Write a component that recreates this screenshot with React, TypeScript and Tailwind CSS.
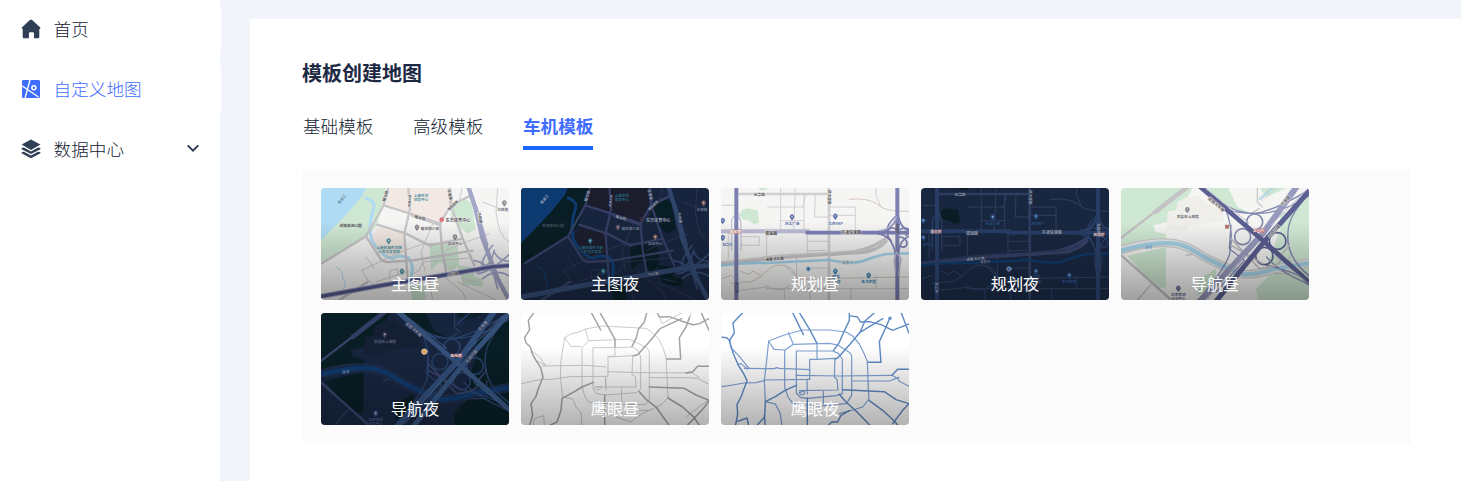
import type { ReactNode } from "react";
import clsx from "clsx";

type Palette = {
  land: string;
  water: string;
  park: string;
  district: string;
  road: string;
  minor: string;
  highway: string;
  highwayDark: string;
  text: string;
  poi: string;
  halo: string;
  badge: string;
};

const day: Palette = {
  land: "#f5f5f4",
  water: "#afdcf4",
  park: "#cfe8d3",
  district: "#f3e9e4",
  road: "#c9c6c9",
  minor: "#cfcccd",
  highway: "#a3a6c8",
  highwayDark: "#565b90",
  text: "#57535a",
  poi: "#5595a2",
  halo: "#f5f5f4",
  badge: "#c98078",
};

const night: Palette = {
  land: "#17243d",
  water: "#0d3a70",
  park: "#081d24",
  district: "#1b1d2c",
  road: "#343d63",
  minor: "#2a3452",
  highway: "#30456b",
  highwayDark: "#304469",
  text: "#939cb0",
  poi: "#26657c",
  halo: "#17243d",
  badge: "#5e4257",
};

function Canvas({ fill, children }: { fill: string; children: ReactNode }) {
  return (
    <svg viewBox="15 18 564 336" className="block h-full w-full" preserveAspectRatio="none" fill="none" strokeLinejoin="round" strokeLinecap="round">
      <rect x="0" y="0" width="600" height="372" fill={fill} />
      {children}
    </svg>
  );
}

type LabelProps = { x: number; y: number; text: string; color: string; halo: string; size?: number; rotate?: number };

function Label({ x, y, text, color, halo, size = 12, rotate = 0 }: LabelProps) {
  return (
    <text
      x={x}
      y={y}
      fill={color}
      stroke={halo}
      strokeWidth="2"
      paintOrder="stroke"
      fontSize={size}
      fontWeight="700"
      textAnchor="middle"
      dominantBaseline="central"
      transform={`rotate(${rotate} ${x} ${y})`}
    >
      {text}
    </text>
  );
}

function Pin({ x, y, color }: { x: number; y: number; color: string }) {
  return (
    <g>
      <path d={`M${x} ${y + 10}l-5-7a7 7 0 1 1 10 0z`} fill={color} />
      <circle cx={x} cy={y - 2} r="2.5" fill="#fff" fillOpacity=".6" />
    </g>
  );
}

function MainMap({ p }: { p: Palette }) {
  const dark = p === night;
  return (
    <Canvas fill={p.land}>
      <g transform={dark ? "matrix(.98 0 0 1 9 0)" : undefined}>
        <path d="M0 0H215L205 60L185 130L150 163L0 250Z" fill={p.park} />
        <path d="M0 0H158L140 40L96 92L60 130L0 190Z" fill={p.water} />
        <path d="M215 10H398L405 50L372 124L300 100L205 74Z" fill={p.district} />
        <path d="M185 134L262 155L268 214L205 228L166 166Z" fill={p.district} />
        <path d="M196 76L265 100L262 148L184 127Z" fill={p.land} />
        <path d="M405 75L440 50L466 60L480 140L455 155L425 130L404 112ZM340 190L380 180L425 190L430 250L405 270L372 240L345 265ZM425 250L470 255L475 285L500 290L500 315L440 305ZM280 310L325 310L330 354H290Z" fill={p.park} />
        <path d="M150 48Q183 60 171 85Q158 122 164 158Q166 185 192 206Q210 228 230 229Q245 216 276 227Q296 247 285 285" stroke={p.water} strokeWidth="9" />
        <path d="M60 255Q83 265 80 290Q95 300 82 320M283 285L300 315" stroke={p.water} strokeWidth="3" />
        <path d="M138 265L246 213L322 185L420 184M138 265L155 295L185 315M180 300L270 270M150 225L175 260M326 265L315 210L350 126M350 200L340 190L268 155M220 290L222 265L245 260L245 280M292 275L310 265L320 240L460 228M390 205L450 180L520 155M425 300L540 354M380 280L440 330L450 354M340 300L350 354M440 10L430 55M545 18L540 90Q548 165 579 180M500 60L579 90M480 300L440 290" stroke={p.minor} strokeWidth="3" />
        <path d="M219 10L203 70L150 163L18 244M203 70L300 100L372 125L404 70L465 40M184 128L270 155L340 190L440 170M150 163L190 225Q198 240 215 240L290 235L470 206M276 10L282 80L265 155L275 290M372 125L378 200L392 280M404 70L398 10M405 70L440 170L475 250M70 354L155 300" stroke={p.road} strokeWidth="7" />
        <path d="M400 10L405 60M290 100L372 127" stroke={p.road} strokeWidth="10" />
        <path d="M456 10L477 75L500 170L545 290L579 354" stroke={p.highway} strokeWidth="13" />
        <path d="M480 70L515 190M535 205Q520 262 480 270M535 210Q550 240 585 238M475 235Q520 245 535 285L545 320M485 275Q525 270 585 212M500 290Q540 255 585 285M530 190Q490 240 500 255" stroke={p.highway} strokeWidth="5" />
        <path d="M10 344L200 310L390 278L530 254L590 250" stroke={p.highway} strokeWidth="15" />
        <path d="M10 344L200 310L390 278L530 254L590 250" stroke={p.highwayDark} strokeWidth="9" />
        <Label x={77} y={52} text="黄浦江" color={dark ? p.text : "#7795a6"} halo={p.water} size={11} rotate={-52} />
        <Label x={104} y={131} text="前滩休闲公园" color={dark ? "#40505c" : p.text} halo={p.park} size={11} />
        <Label x={315} y={39} text="上海东方" color={p.poi} halo={p.district} size={11} />
        <Label x={315} y={51} text="体育中心" color={p.poi} halo={p.district} size={11} />
        <Label x={426} y={113} text="东方体育中心" color={p.text} halo={p.halo} size={12.5} />
        <circle cx="377" cy="113" r="7" fill={dark ? "#373144" : "#dc727a"} />
        <Label x={342} y={140} text="耀体路小区" color={dark ? "#707a90" : "#737078"} halo={p.halo} size={11} />
        <Pin x={303} y={137} color={dark ? "#574b5a" : "#88868b"} />
        <Label x={417} y={184} text="实训中心" color={dark ? "#707a90" : "#737078"} halo={p.halo} size={11} />
        <Pin x={417} y={166} color={dark ? "#77575b" : "#88868b"} />
        <Label x={219} y={196} text="上海前滩东方路" color={p.poi} halo={p.district} size={11} />
        <Label x={219} y={208} text="人民法文学校" color={p.poi} halo={p.district} size={11} />
        <Pin x={218} y={178} color={p.poi} />
        <Pin x={258} y={269} color={p.poi} />
        <Label x={560} y={83} text="三林路" color={dark ? "#707a90" : "#737078"} halo={p.halo} size={11} />
        <Pin x={565} y={64} color={dark ? "#77575b" : "#88868b"} />
        <Label x={208} y={42} text="耀龙路" color={p.text} halo={p.halo} size={11} rotate={-72} />
        <Label x={281} y={57} text="前滩大道" color={p.text} halo={p.halo} size={9} rotate={-86} />
        <Label x={312} y={107} text="耀体路" color={p.text} halo={p.halo} size={11} rotate={15} />
        <Label x={402} y={38} text="东育路" color={p.text} halo={p.halo} size={11} rotate={76} />
        <Label x={410} y={70} text="海阳西路" color={p.text} halo={p.halo} size={10} rotate={-43} />
        <Label x={492} y={107} text="济阳路" color={p.text} halo={p.halo} size={11} rotate={78} />
        <Label x={411} y={276} text="中环路" color={p.text} halo={p.halo} size={11} rotate={-9} />
      </g>
    </Canvas>
  );
}

function PlanMap({ p }: { p: Palette }) {
  const dark = p === night;
  const land = dark ? "#18263f" : p.land;
  const label = dark ? "#284d80" : "#6072ac";
  const highway = dark ? "#273d65" : "#7d80b3";
  const road = dark ? "#303d61" : "#d2cfd2";
  return (
    <Canvas fill={land}>
      <g transform={dark ? "translate(2 0)" : undefined}>
        <path d="M77 84L92 79L125 84L130 122L115 127L98 116L80 112L71 99ZM124 15H154L151 25L132 24Z" fill={p.park} />
        <path d="M62 36H338M194 18V145M238 18L233 145M264 36V145M298 36L296 105H336M260 75L270 36M155 75H264M418 75H338M418 75V145M192 116H265M274 155V220M274 178H338M274 207L330 205M152 155V225M75 164H130V190H75M241 220L243 320M275 258H338M205 250L243 285M336 100H418M62 70H18M37 155V230M70 325L155 315M150 320H579M205 320V354M405 320V354M480 280V320M282 320V354" stroke={road} strokeWidth="3" />
        <path d="M60 36H338M339 10V354" stroke={road} strokeWidth="8" />
        <path d="M10 247L200 226L320 218L440 211Q485 205 510 178M340 218Q455 213 515 165" stroke={dark ? "#333f63" : "#c9c7ca"} strokeWidth="10" />
        <path d="M10 240L200 219L330 212L450 204" stroke={dark ? "#293757" : "#d5d2d3"} strokeWidth="4" />
        <path d="M10 251Q75 241 150 243L338 234Q400 246 435 239Q480 222 510 216L590 214" stroke={dark ? "#103763" : "#a5d5eb"} strokeWidth="8" />
        <path d="M400 52Q455 46 485 67Q505 90 579 88M45 304L85 300Q115 305 150 270Q175 240 212 252Q250 270 233 300Q208 330 170 321L150 310M245 292Q350 290 400 288L579 285M18 290L45 280L55 290M75 268L96 277L112 267L135 282" stroke={dark ? "#2b4264" : "#d7c6c1"} strokeWidth="3" />
        <path d="M480 18V40L495 75M75 120L68 93" stroke={road} strokeWidth="3" />
        <path d="M47 205V120Q47 102 61 100Q75 110 75 125V205" stroke={dark ? "#283d62" : "#c5c5dd"} strokeWidth="4" />
        <path d="M10 148H277" stroke={dark ? highway : "#bcbdd6"} strokeWidth="12" />
        <path d="M273 152H590" stroke={highway} strokeWidth="11" />
        <path d="M61 10V360M544 10V360" stroke={highway} strokeWidth="12" />
        <path d="M485 152Q525 145 541 112M485 155Q530 160 539 220M548 105Q555 145 590 148M548 210Q550 170 590 158M525 175C505 160 518 125 540 142M554 142C580 130 585 150 570 160M550 165C580 165 580 205 553 193M537 105Q510 130 514 150" stroke={highway} strokeWidth="5" />
        <path d="M541 105Q525 145 490 145M541 210L555 230L548 280M541 210L534 235L539 270" stroke={dark ? "#2b4064" : "#b5b6cb"} strokeWidth="4" />
        <Label x={130} y={36} text="光华路" color={p.text} halo={land} size={11} />
        <Label x={340} y={46} text="西大望路" color={p.text} halo={land} size={11} rotate={90} />
        <Label x={228} y={125} text="万达广场" color={label} halo={land} size={11} />
        <Pin x={228} y={106} color={label} />
        <Label x={358} y={124} text="北京SKP" color={label} halo={land} size={11} />
        <Pin x={358} y={104} color={label} />
        <Label x={166} y={152} text="建国路" color={p.text} halo={land} size={12} />
        <Label x={58} y={147} text="国贸桥" color={dark ? "#d0c7ce" : "#ffffff"} halo={p.badge} size={11} />
        <Label x={405} y={150} text="京通快速路" color={p.text} halo={land} size={12} />
        <Label x={176} y={230} text="通惠河北路" color={p.text} halo={land} size={11} rotate={-3} />
        {!dark && <Label x={394} y={240} text="通惠河" color="#7fa5ba" halo={land} size={11} />}
        <Label x={545} y={140} text="东四环" color={p.text} halo={highway} size={11} rotate={90} />
        <Label x={35} y={188} text="航华科" color={label} halo={land} size={10} />
        <Pin x={20} y={168} color={label} />
        <Pin x={20} y={117} color={label} />
        <circle cx="277" cy="261" r="6.5" fill={dark ? "#3b6ba7" : "#397fb6"} stroke={dark ? "#8c9bb3" : "#c1d8e7"} strokeWidth="3" />
        <Label x={360} y={286} text="双井" color={dark ? label : "#4a89b8"} halo={land} size={12} />
        <Label x={362} y={300} text="百环" color={dark ? label : "#4a89b8"} halo={land} size={12} />
        <Pin x={358} y={269} color={dark ? label : "#4a89b8"} />
        <Label x={458} y={299} text="金茂家园" color={dark ? label : "#4a89b8"} halo={land} size={11} />
        <Pin x={458} y={281} color={dark ? label : "#4a89b8"} />
        <Label x={60} y={317} text="东三环" color={p.text} halo={highway} size={11} rotate={90} />
        {dark && <Label x={547} y={156} text="四惠桥" color="#d0c7ce" halo={p.badge} size={11} />}
        {dark && <Label x={205} y={238} text="通惠河" color="#6d7c97" halo={land} size={10} />}
      </g>
    </Canvas>
  );
}

function NaviMap({ p }: { p: Palette }) {
  const dark = p === night;
  const core = dark ? "#345079" : "#5b5f91";
  const wide = dark ? "#304b76" : "#999bbe";
  const ramp = dark ? "#273e66" : "#858ab0";
  const label = dark ? "#425582" : "#61698f";
  return (
    <Canvas fill={p.land}>
      <g transform={dark ? "translate(-8 0)" : undefined}>
        <path d="M10 0H240L215 45L185 60L180 85L155 90V120L112 130L118 150L150 155V175L10 220ZM420 0H600V360H575L450 260L500 120ZM260 10H350L400 70L450 80L410 95L340 75L280 50ZM35 222L150 195V315L120 320ZM460 280L580 260V370H430L420 320ZM250 290L300 260L300 310L245 340Z" fill={p.park} />
        <path d="M335 15H415L430 55L510 18H585L520 90L420 100L365 75Z" fill={p.land} />
        <path d="M212 45L245 42L320 92L325 118L222 130L209 148L152 140L155 92L180 85L185 60Z" fill={dark ? "#141f34" : "#efeeeb"} />
        <path d="M18 222L178 365M105 308L65 354M210 220Q270 205 325 260M424 18V60L440 75M405 95L430 80M460 245V275H520V220" stroke={dark ? "#2c3a5c" : "#c9c8c8"} strokeWidth="4" />
        <path d="M10 172L110 95L222 10M18 222L178 365" stroke={dark ? "#374269" : "#c0bec1"} strokeWidth="7" />
        <path d="M118 90L220 10" stroke={dark ? "#333e66" : "#c4c2c4"} strokeWidth="14" />
        <path d="M10 205Q105 175 175 184Q215 190 260 222Q325 257 380 276Q420 280 470 262L590 241" stroke={dark ? "#242f4c" : "#c9c8c8"} strokeWidth="26" />
        <path d="M10 205Q105 175 175 184Q215 190 260 222Q325 257 380 276Q420 280 470 262L590 241" stroke={dark ? "#14294a" : "#e6e9ea"} strokeWidth="20" />
        <path d="M10 207Q105 179 175 184Q215 190 260 222Q325 257 380 276Q420 280 470 262L590 241" stroke={dark ? "#103868" : "#a6d2e6"} strokeWidth="13" />
        <path d="M432 52L470 18" stroke={dark ? "#233c66" : "#a6d2e6"} strokeWidth="5" />
        <path d="M427 48L463 16M438 58L480 20" stroke={dark ? "#2c3a5c" : "#c9c8c8"} strokeWidth="2" />
        <circle cx="416" cy="120" r="24" stroke={ramp} strokeWidth="5" />
        <circle cx="380" cy="164" r="24" stroke={ramp} strokeWidth="5" />
        <circle cx="485" cy="177" r="25" stroke={dark ? ramp : core} strokeWidth="5" />
        <circle cx="445" cy="222" r="26" stroke={dark ? ramp : core} strokeWidth="5" />
        <path d="M260 18L332 90Q355 155 340 220Q318 275 240 362M280 45Q365 96 420 94Q500 95 585 38M330 82Q410 104 450 86Q500 72 585 20M585 310Q485 268 452 225M590 290Q505 230 517 140Q524 90 590 25M450 250Q530 265 590 305M345 130L340 200L385 235L300 330M515 160Q512 230 585 285" stroke={ramp} strokeWidth="4" />
        <path d="M345 170L430 260Q500 255 495 220L520 190M345 190L440 245" stroke={dark ? "#374064" : "#c1bdc0"} strokeWidth="5" />
        <path d="M545 10L440 155L245 365" stroke={wide} strokeWidth="18" />
        <path d="M250 12L440 175L590 310" stroke={core} strokeWidth="14" />
        <path d="M590 15L446 177L290 370" stroke={core} strokeWidth="15" />
        <path d="M465 130L570 25M385 220L275 350M270 20L400 124M480 225L585 310" stroke={dark ? "#445e88" : "#c0c2d2"} strokeWidth="3" />
        <Label x={302} y={66} text="远西河东路" color={p.text} halo={p.halo} size={12} rotate={40} />
        <Label x={507} y={55} text="北岸路" color={p.text} halo={p.halo} size={12} rotate={-48} />
        <Label x={473} y={147} text="北四环路" color={p.text} halo={p.halo} size={12} rotate={-50} />
        <Label x={215} y={102} text="房县石上海馆" color={dark ? "#515971" : "#737078"} halo={p.land} size={11} />
        <Pin x={214} y={84} color={dark ? "#464256" : "#85848b"} />
        <Label x={97} y={194} text="清河" color={dark ? "#7688a5" : "#7fa5ba"} halo={p.water} size={11} rotate={-4} />
        <Label x={428} y={146} text="五元桥" color="#e6d9dc" halo={dark ? "#8b4b59" : "#c96866"} size={11.5} />
        <Label x={187} y={338} text="北京崇德" color={label} halo={p.land} size={11} />
        <Label x={187} y={348} text="体育中心" color={label} halo={p.land} size={10} />
        <Pin x={187} y={320} color={label} />
        {dark ? (
          <circle cx="333" cy="134" r="8" fill="#e4a34e" stroke="#d5c9b6" strokeWidth="3" />
        ) : (
          <rect x="327" y="128" width="12" height="12" rx="2" fill="#b97871" />
        )}
      </g>
    </Canvas>
  );
}

function EagleDayMap() {
  return (
    <Canvas fill="#ffffff">
      <g stroke="#cbcbce" strokeWidth="3">
        <path d="M146 92L162 82L195 73L208 66L259 57L390 64L409 77L430 99L442 125L450 151L455 250L456 273L435 294L400 310L370 310M146 92L135 160L133 210L140 270L170 276L180 300L195 318L198 360M146 92L164 118L194 119" />
        <path d="M208 66L217 101L340 97L357 104L390 122Q400 128 400 136V280L388 293L300 292L220 286L207 270L198 240V121L217 103" />
        <path d="M232 122H297L350 120L367 132L374 150V246L362 257L267 264L240 259L231 245V130Z" />
        <path d="M276 148H297M276 153V208H268L269 242M350 148L348 202L358 209L360 240M276 150L350 146M297 120V148M240 240H360M232 248Q240 235 258 240Q255 250 242 249M270 214V250M317 240V285M18 230L50 222L80 217L100 218L135 213L160 209L268 208M400 212H520L545 214L579 232M275 194L370 197L530 198L550 212M80 177L210 175L270 180M45 130L70 150L90 176L60 160L45 135" />
        <path d="M426 20L438 50L500 16M510 60L525 20M52 354L55 335L83 326L85 354M300 330L345 345L380 318L400 310M510 330L579 278" />
      </g>
      <g stroke="#a3a4a9" strokeWidth="4.5">
        <path d="M55 15L37 40L41 68L26 92L30 108L43 120L50 142L60 160L74 182L81 210L67 245L60 268L45 290L50 325L40 358" />
        <path d="M225 15L254 69M251 15L274 55L297 97V120M393 15L385 45L367 67L361 92L348 118M497 35L432 65L400 104L365 143L352 146M423 16L430 30L460 29L493 41L530 53L550 50L579 35M555 15L579 70M521 30L510 60L490 92L494 156H452M579 178H545L530 194L510 198M456 273L500 300L535 332L552 358M579 282L560 307L515 354M400 240L505 244L540 264L579 280M370 254L390 277L420 300L460 356M232 226L198 240L170 257L138 274L135 310L123 345L95 358M266 265V358" />
      </g>
    </Canvas>
  );
}

function EagleNightMap() {
  return (
    <Canvas fill="#ffffff">
      <g stroke="#7fa1d2" strokeWidth="3.6">
        <path d="M158 102L205 84L259 69L340 69L390 75L410 87L430 111L443 137L454 163L457 245L459 276L440 300L410 309L370 320M158 102L152 160L145 220L148 284L178 291L193 320L198 358M158 102L174 127L207 129" />
        <path d="M217 77L232 112L340 109L365 114L394 132Q407 140 407 150V265L391 290L310 297L230 289L216 270L206 240V130L232 112" />
        <path d="M241 132H350L367 139L379 156V260L360 266L275 274L253 271L241 258V135Z" />
        <path d="M281 157H303M281 160V217H273L274 260M357 156L355 210L363 217L366 248M303 110V157L357 154M250 251L366 249M250 257A8 8 0 1 0 265 252L250 257M322 250V290M18 239L50 234L85 228L120 227L150 219L282 217M407 222H520L549 211M240 205L370 207L528 205L546 215L550 223L579 238M85 184L175 185L182 182L190 184L282 188M43 120L70 148L99 184M65 173L75 170L95 187" />
      </g>
      <g stroke="#5f8ac4" strokeWidth="4.3">
        <path d="M82 15L51 48L55 78L40 101L52 140L67 175L82 198L93 221L75 270L63 292L65 320L58 358M18 91L32 92L43 102M65 343L93 333L98 356" />
        <path d="M229 15L262 83M249 15L279 64L303 109M400 15V40L382 78L370 106L353 130M500 35L432 76L400 114L365 153L357 156M400 26L425 30L433 45L460 44L495 53L530 70L550 62L579 51M432 76L447 42L478 15M555 15L579 79M522 32L510 60L490 104L495 166H455M579 187H545L528 205M459 280L500 310L535 342L548 358M579 290L560 310L530 350M380 248L505 254L540 278L579 290M370 262L390 285L420 312L465 358M241 235L207 250L178 269L148 284L146 330L120 358M274 273V358M145 325L148 358M338 354L347 345L365 345L375 325L400 311" />
        <circle cx="522" cy="34" r="3" />
      </g>
    </Canvas>
  );
}

const templates: { name: string; map: ReactNode; shade: string }[] = [
  { name: "主图昼", map: <MainMap p={day} />, shade: "to-black/35" },
  { name: "主图夜", map: <MainMap p={night} />, shade: "to-black/20" },
  { name: "规划昼", map: <PlanMap p={day} />, shade: "to-black/35" },
  { name: "规划夜", map: <PlanMap p={night} />, shade: "to-black/20" },
  { name: "导航昼", map: <NaviMap p={day} />, shade: "to-black/35" },
  { name: "导航夜", map: <NaviMap p={night} />, shade: "to-black/20" },
  { name: "鹰眼昼", map: <EagleDayMap />, shade: "to-black/30" },
  { name: "鹰眼夜", map: <EagleNightMap />, shade: "to-black/30" },
];

function HomeIcon() {
  return (
    <svg viewBox="0 0 20 20" className="h-5 w-5" fill="currentColor">
      <path d="M8.9.9a1.7 1.7 0 0 1 2.2 0l7.9 7.3c.8.8.3 1.8-.7 1.8v8c0 .8-.6 1.3-1.3 1.3h-4v-4.8c0-.8-.5-1.2-1.2-1.2H9.2c-.8 0-1.3.4-1.3 1.2v4.8H3.1c-.8 0-1.4-.5-1.4-1.3v-8C.7 10 .3 9 1.1 8.2z" />
    </svg>
  );
}

function MapIcon() {
  return (
    <svg viewBox="0 0 20 20" className="h-5 w-5">
      <rect x="1" y="1" width="18" height="18" rx="1.3" fill="currentColor" />
      <g fill="none" stroke="#fff">
        <path d="M9.1.5 4 19.5M.5 6.5 17.5 18" strokeWidth="1.3" />
        <circle cx="12.9" cy="8.8" r="2" strokeWidth="1.5" />
      </g>
    </svg>
  );
}

function LayersIcon() {
  return (
    <svg viewBox="0 0 20 20" className="h-5 w-5" fill="currentColor">
      <path d="M10 .4 19.4 5.6 10 10.9.6 5.6z" />
      <path d="M.6 9.1 2.9 8.6 10 12.4l7.1-3.8 2.3.5v1.1L10 15.1.6 10.2zM.6 13.2l2.3-.5L10 16.5l7.1-3.8 2.3.5v1.1L10 19.3.6 14.3z" />
    </svg>
  );
}

const menu = [
  { name: "首页", icon: <HomeIcon />, active: false, expandable: false },
  { name: "自定义地图", icon: <MapIcon />, active: true, expandable: false },
  { name: "数据中心", icon: <LayersIcon />, active: false, expandable: true },
];

const tabs = ["基础模板", "高级模板", "车机模板"];

export default function App() {
  return (
    <div className="flex h-[481px] w-full overflow-hidden bg-[#f1f5fa] font-['Noto_Sans_CJK_SC',sans-serif] text-[#2d3e55]">
      <aside className="w-[220px] shrink-0 bg-white pt-1">
        <nav className="flex w-[221px] flex-col gap-2.5">
          {menu.map((item) => (
            <a
              key={item.name}
              className={clsx(
                "flex h-[50px] items-center rounded-sm pl-[21px]",
                item.expandable ? "w-[220px]" : "w-[221px] bg-white",
                item.active ? "text-[#3f6dff]" : "text-[#2d3e55]",
              )}
            >
              {item.icon}
              <span className={clsx("ml-[12.6px] text-[17.6px] leading-[26px] font-light", !item.active && "text-[#142034]")}>{item.name}</span>
              {item.expandable && (
                <svg viewBox="0 0 14 10" className="mr-5 mb-[3px] ml-auto h-2.5 w-3.5" fill="none" stroke="currentColor" strokeWidth="2">
                  <path d="m1.7 2.4 5.3 5.2 5.3-5.2" />
                </svg>
              )}
            </a>
          ))}
        </nav>
      </aside>

      <main className="mt-[19px] ml-[30px] flex-1 bg-white pt-[39px] pr-[50px] pl-[53px]">
        <h1 className="-indent-px text-[20px] leading-[30px] font-bold text-[#1e2a44]">模板创建地图</h1>
        <div className="mt-[25px] flex gap-[39.6px]">
          {tabs.map((tab, index) => (
            <button
              key={tab}
              className={clsx(
                "h-[37px] border-b-4 text-[17.6px] leading-[26px]",
                index === 2 ? "border-[#1966ff] font-bold text-[#3f6dff]" : "border-transparent font-light text-[#101a30]",
              )}
            >
              <span className="block h-[33px]">{tab}</span>
            </button>
          ))}
        </div>
        <section className="mt-[19px] flex h-[275px] flex-wrap content-start gap-x-3 gap-y-[13px] bg-[#fbfbfb] pt-[19px] pl-[18px]">
          {templates.map((template) => (
            <article key={template.name} className="grid h-28 w-[188px] overflow-hidden rounded-[4px]">
              <div className="col-start-1 row-start-1 h-28">{template.map}</div>
              <div
                className={clsx(
                  "col-start-1 row-start-1 z-10 flex items-end justify-center bg-linear-to-b from-transparent from-30% pb-[5px] text-[16.2px] leading-6 text-white",
                  template.shade,
                )}
              >
                {template.name}
              </div>
            </article>
          ))}
        </section>
      </main>
    </div>
  );
}
